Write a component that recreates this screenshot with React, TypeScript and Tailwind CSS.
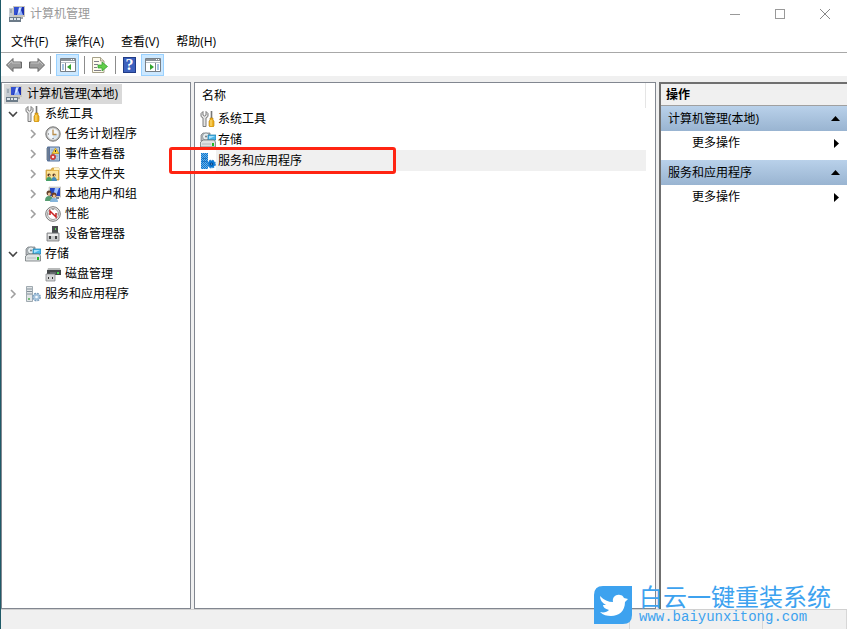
import type { ReactNode } from "react";

function Svg({ children }: { children: ReactNode }) {
  return (
    <svg viewBox="0 0 16 16" className="size-4 shrink-0" aria-hidden="true">
      {children}
    </svg>
  );
}

function ComputerIcon() {
  return (
    <Svg>
      <path d="M4 0h12v11H4z" fill="#c9c6bc" />
      <path d="M5 1h10v8H5z" fill="#1b2fae" />
      <path d="M5 1h5L7 9H5z" fill="#3350d0" />
      <path d="m10 1 3 0-1 3 2 5H8z" fill="#8fb0fa" />
      <path d="m10 2 2 0-1 4-2 2z" fill="#dbe8ff" />
      <path d="M0 2h4v9H0z" fill="#c6ccd2" />
      <path d="M1 4h2M1 6h2" stroke="#7d8a95" />
      <path d="M0 11h12v5H0z" fill="#6c7b88" />
      <path d="M1 12h3v2H1zM5 12h2v2H5zM8 12h3v2H8z" fill="#dfe6ec" />
      <path d="M12 11h2v2h-2z" fill="#a5a8ab" />
    </Svg>
  );
}

function ToolsIcon() {
  return (
    <Svg>
      <path d="M3 .5 1 2.500v3l2 1.500v8.500h3V7l2-1.500v-3L6 .5V4L4.500 5 3 4z" fill="#e3e3e3" stroke="#707070" strokeWidth=".9" />
      <path d="M11.500 0v8" stroke="#777" strokeWidth="1.600" />
      <path d="M10 7h3v2l1 1v5l-1 1h-3l-1-1v-5l1-1z" fill="#efb321" stroke="#b37b08" strokeWidth=".6" />
      <path d="M11 9v6" stroke="#ffe28a" />
    </Svg>
  );
}

function ClockIcon() {
  return (
    <Svg>
      <circle cx="8" cy="8" r="7.200" fill="#b7b7b5" stroke="#777" />
      <circle cx="8" cy="8" r="5.600" fill="#f3f7fb" stroke="#ddd" strokeWidth=".5" />
      <path d="M8 8h5a5 5 0 0 1-5 5z" fill="#d4e5f4" />
      <path d="M8 3.500V8.500h3.500" fill="none" stroke="#b98d4a" strokeWidth="1.300" />
      <path d="M3 8h1M8 12v1" stroke="#555" />
    </Svg>
  );
}

function EventIcon() {
  return (
    <Svg>
      <path d="M2.500 1h12v14h-12z" fill="#b6cbe2" stroke="#52719b" />
      <path d="M3 1h2v14H3z" fill="#5d7396" />
      <path d="M1 3h3M1 5h3M1 7h3M1 9h3M1 11h3M1 13h3" stroke="#7b8591" />
      <path d="M6 4h7M6 7h7M6 10h7M6 13h7" stroke="#7d9cbd" strokeWidth=".7" />
      <path d="m10.500 2 3.500 5.500H7z" fill="#ffd23c" stroke="#b98d0b" strokeWidth=".6" />
      <path d="M10.500 4v2" stroke="#333" />
      <circle cx="8" cy="11" r="2.700" fill="#d84545" stroke="#a92929" strokeWidth=".5" />
      <path d="m7 10 2 2m0-2-2 2" stroke="#fff" strokeWidth=".8" />
    </Svg>
  );
}

function SharedIcon() {
  return (
    <Svg>
      <path d="M1 4h5l1-2h7v12H1z" fill="#e7ba50" stroke="#c29335" strokeWidth=".7" />
      <path d="M2 5h11v8H2z" fill="#fbe399" />
      <path d="M9 2h5v2H9z" fill="#fff4c9" />
      <circle cx="4" cy="9" r="1.600" fill="#5b3b22" />
      <circle cx="9" cy="9" r="1.600" fill="#5b3b22" />
      <path d="M1 15q0-4 3-4t3 4z" fill="#45a067" />
      <path d="M6.500 15q0-4 2.500-4t3 4z" fill="#438bb7" />
      <path d="M4 9.500h1M9 9.500h1" stroke="#efc59b" strokeWidth="1.400" />
    </Svg>
  );
}

function UsersIcon() {
  return (
    <Svg>
      <path d="M4 1h12v10H4z" fill="#d8d6cc" stroke="#a9aaa8" strokeWidth=".5" />
      <path d="M5 2h10v8H5z" fill="#2446c4" />
      <path d="M10 2h4l-3 8H8z" fill="#9cc0ff" />
      <path d="M11 11h3v2h-3z" fill="#7c8793" />
      <circle cx="4" cy="7" r="2.500" fill="#65412b" />
      <circle cx="9" cy="9" r="2.500" fill="#6d3c20" />
      <circle cx="4.300" cy="8" r="1.500" fill="#edc097" />
      <circle cx="9.200" cy="10" r="1.500" fill="#edc097" />
      <path d="M0 15q0-5 4-5t4 5z" fill="#559b70" />
      <path d="M5 16q0-4 4-4t4 4z" fill="#84b5dc" />
    </Svg>
  );
}

function PerformanceIcon() {
  return (
    <Svg>
      <circle cx="8" cy="8" r="7.300" fill="#eee" stroke="#777" />
      <circle cx="8" cy="8" r="5.500" fill="#fff" stroke="#777" strokeWidth=".7" />
      <path d="M5 9V5l6 6V7" fill="none" stroke="#c92020" strokeWidth="1.500" />
      <path d="M3.500 8h1M11.500 8h1M8 3v1" stroke="#555" />
    </Svg>
  );
}

function DeviceIcon() {
  return (
    <Svg>
      <path d="M7 0h6v8H7z" fill="#4a4d50" />
      <path d="M10 2h1v2h-1z" fill="#53de4d" />
      <path d="M2 7h12v8H2z" fill="#c8c9ca" stroke="#77797b" strokeWidth=".8" />
      <path d="M3 8h10v2H3z" fill="#ececec" />
      <path d="M4 10h2v3H4zM10 10h2v3h-2z" fill="#404244" />
    </Svg>
  );
}

function StorageIcon() {
  return (
    <Svg>
      <path d="M1 3 3 1h7v8H1z" fill="#b7bbbe" stroke="#71777c" strokeWidth=".7" />
      <circle cx="6" cy="4.500" r="3.500" fill="#e7edef" stroke="#7e898e" strokeWidth=".7" />
      <circle cx="6" cy="4.500" r="1" fill="#70777b" />
      <path d="M8 3h8v5H8z" fill="#4bb5e9" stroke="#187aa9" strokeWidth=".7" />
      <path d="M9 4h6L9 7z" fill="#a8e1fc" />
      <path d="m2 9 1-1h11l1.500 2v5H.5v-5z" fill="#dfe2e3" stroke="#70777a" strokeWidth=".8" />
      <path d="M2 12h9" stroke="#b3b9bc" />
      <path d="M12 11h2v3h-2z" fill="#22b927" />
    </Svg>
  );
}

function DiskIcon() {
  return (
    <Svg>
      <path d="M3 2h12l1 3H2z" fill="#b7b9b9" />
      <path d="M2 4h14v5H2z" fill="#45484a" />
      <path d="M12 6h2v2h-2z" fill="#46e051" />
      <path d="M5 7h6" stroke="#82898c" />
      <path d="M1 8h9v7H1z" fill="#d4d5d6" stroke="#797c80" strokeWidth=".7" />
      <path d="M3 11h1v2H3zM7 11h1v2H7z" fill="#333" />
    </Svg>
  );
}

function ServicesIcon() {
  return (
    <Svg>
      <path d="M1.500.5h6v15h-6z" fill="#e1e5e7" stroke="#8b979f" strokeWidth=".8" />
      <path d="M2 3h5M2 5.500h5M2 8h5" stroke="#82909a" />
      <path d="M3 12h2v2H3z" fill="#73bb77" />
      <circle cx="11.500" cy="11" r="3.400" fill="#b5d0e6" stroke="#7d9fbd" strokeWidth="2" strokeDasharray="1.800 .870" />
      <circle cx="11.500" cy="11" r="3" fill="#a3c2dc" />
      <circle cx="11.500" cy="11" r="1.300" fill="#f4faff" />
    </Svg>
  );
}

function SelectedServicesIcon() {
  return (
    <Svg>
      <defs>
        <pattern id="dither" width="2" height="2" patternUnits="userSpaceOnUse">
          <path d="M0 0h2v2H0z" fill="#0a78d4" />
          <path d="M0 0h1v1H0zM1 1h1v1H1z" fill="#6fb0e2" />
        </pattern>
      </defs>
      <path d="M1 0h7v16H1z" fill="url(#dither)" />
      <path d="M2 5.500h5M2 8.500h5" stroke="#0a63b4" strokeWidth=".6" />
      <circle cx="11.500" cy="11" r="3.400" fill="#0a78d4" stroke="#2a86d4" strokeWidth="2" strokeDasharray="1.800 .870" />
      <circle cx="11.500" cy="11" r="3" fill="#0a78d4" />
      <circle cx="11.500" cy="11" r="1.500" fill="#063f80" />
      <circle cx="11.500" cy="11" r=".6" fill="#a8d2f2" />
    </Svg>
  );
}

function Chevron({ open }: { open: boolean }) {
  return (
    <svg viewBox="0 0 10 10" className="size-[10px]" fill="none" aria-hidden="true">
      <path d={open ? "m1 3 4 4 4-4" : "m3 1 4 4-4 4"} stroke={open ? "#444" : "#a0a0a0"} strokeWidth="1.600" />
    </svg>
  );
}

function ArrowIcon({ back = false }: { back?: boolean }) {
  return (
    <Svg>
      <path
        d={back ? "M.5 8 7 1.500V5h8.500v6H7v3.500z" : "M15.500 8 9 1.500V5H.5v6H9v3.500z"}
        fill="#9b9b9b"
        stroke="#686868"
      />
      <path d={back ? "M2 8 6 4v2h8" : "M2 6h8V4l4 4"} fill="none" stroke="#c4c4c4" />
    </Svg>
  );
}

function PaneIcon({ right = false }: { right?: boolean }) {
  return (
    <svg viewBox="0 0 16 14" className="h-[14px] w-4" aria-hidden="true">
      <path d="M.5.500h15v13H.5z" fill="#fff" stroke="#777f86" />
      <path d="M1 1h14v2H1z" fill="#8b9298" />
      <path d="M11 1.500h1M13 1.500h1" stroke="#fff" />
      <path d="M1 4.500h14" stroke="#b9c1c7" />
      <path d={right ? "M10.500 5v8" : "M5.500 5v8"} stroke="#7c868e" />
      <path d={right ? "M12 7h2M12 9h2M12 11h2" : "M2 7h2M2 9h2M2 11h2"} stroke="#4d89c7" />
      <path d={right ? "m5 6 4 3-4 3z" : "m11 6-4 3 4 3z"} fill="#32a52e" />
    </svg>
  );
}

function ExportIcon() {
  return (
    <Svg>
      <path d="M.5.500h8L12 4v11.500H.5z" fill="#fffced" stroke="#a6a189" />
      <path d="M8.500.5V4H12" fill="#e5e1cd" stroke="#a6a189" />
      <path d="M2 4.500h5M2 7.500h4M2 10.500h3M2 13.500h7" stroke="#807f89" />
      <path d="M6 8h4V5l5.500 4.500L10 14v-3H6z" fill="#62ce4a" stroke="#299b28" strokeWidth=".7" />
    </Svg>
  );
}

function HelpIcon() {
  return (
    <span className="flex h-4 w-[13px] items-center justify-center border border-[#203b86] bg-[#3d61bd] font-['Liberation_Serif',serif] text-base leading-4 font-bold text-white">
      ?
    </span>
  );
}

type Node = { label: string; icon: ReactNode; open?: boolean; children?: Node[] };

const nodes: Node[] = [
  {
    label: "系统工具",
    icon: <ToolsIcon />,
    open: true,
    children: [
      { label: "任务计划程序", icon: <ClockIcon />, open: false },
      { label: "事件查看器", icon: <EventIcon />, open: false },
      { label: "共享文件夹", icon: <SharedIcon />, open: false },
      { label: "本地用户和组", icon: <UsersIcon />, open: false },
      { label: "性能", icon: <PerformanceIcon />, open: false },
      { label: "设备管理器", icon: <DeviceIcon /> },
    ],
  },
  {
    label: "存储",
    icon: <StorageIcon />,
    open: true,
    children: [{ label: "磁盘管理", icon: <DiskIcon /> }],
  },
  { label: "服务和应用程序", icon: <ServicesIcon />, open: false },
];

function TreeItem({ node }: { node: Node }) {
  return (
    <li role="treeitem" aria-expanded={node.open}>
      <div className="flex h-5 items-center">
        {node.open === undefined ? (
          <span className="w-[21px]" />
        ) : (
          <button aria-label={`${node.open ? "折叠" : "展开"}${node.label}`} className="flex w-[21px] pl-1">
            <Chevron open={node.open} />
          </button>
        )}
        {node.icon}
        <span className="pl-1 whitespace-nowrap">{node.label}</span>
      </div>
      {node.children && (
        <ul role="group" className="pl-5">
          {node.children.map((child) => (
            <TreeItem key={child.label} node={child} />
          ))}
        </ul>
      )}
    </li>
  );
}

function ActionGroup({ title }: { title: string }) {
  return (
    <section className="mb-[5px]">
      <button className="flex h-[25px] w-full items-center justify-between bg-linear-to-b from-[#b9d1ea] to-[#99b4d1] px-[7px]">
        {title}
        <svg viewBox="0 0 9 5" className="h-[5px] w-[9px]" aria-hidden="true">
          <path d="M0 5 4.500 0 9 5z" />
        </svg>
      </button>
      <button className="flex h-6 w-full items-center justify-between pr-2 pl-[31px]">
        更多操作
        <svg viewBox="0 0 5 9" className="h-[9px] w-[5px]" aria-hidden="true">
          <path d="m0 0 5 4.500L0 9z" />
        </svg>
      </button>
    </section>
  );
}

function Separator() {
  return <span className="h-[18px] w-px bg-[#8c8c8c]" />;
}

const toggled = "flex h-[22px] w-[23px] items-center justify-center border border-[#99d1ff] bg-[#cce8ff]";

export default function App() {
  return (
    <div className="relative flex h-screen flex-col overflow-hidden border-l border-[#1f5a68] bg-[#f0f0f0] font-['Open_Sans','Noto_Sans_CJK_SC',sans-serif] text-xs leading-5 text-black">
      <header className="flex h-7 shrink-0 items-center bg-white pl-2 text-[#999]">
        <ComputerIcon />
        <h1 className="grow pl-[5px]">计算机管理</h1>
        <div className="flex gap-[1px]">
          <button aria-label="最小化" className="flex h-7 w-11 items-center justify-center">
            <span className="h-px w-[10px] bg-[#999]" />
          </button>
          <button aria-label="最大化" className="flex h-7 w-11 items-center justify-center">
            <span className="size-[10px] border border-[#999]" />
          </button>
          <button aria-label="关闭" className="flex h-7 w-11 items-center justify-center">
            <svg viewBox="0 0 10 10" className="size-[10px]" stroke="#888" aria-hidden="true">
              <path d="m0 0 10 10M10 0 0 10" />
            </svg>
          </button>
        </div>
      </header>
      <nav className="flex h-[25px] shrink-0 items-end gap-[17px] border-b border-[#a8a8a8] bg-white pl-[10px]">
        <button>文件(F)</button>
        <button>操作(A)</button>
        <button>查看(V)</button>
        <button>帮助(H)</button>
      </nav>
      <div className="flex h-[23px] shrink-0 items-center gap-[5px] bg-white pl-[5px]" role="toolbar">
        <button aria-label="后退" className="mr-[2px]"><ArrowIcon back /></button>
        <button aria-label="前进"><ArrowIcon /></button>
        <Separator />
        <button aria-label="显示控制台树" aria-pressed="true" className={toggled}><PaneIcon /></button>
        <div className="flex items-center gap-[7px]">
          <Separator />
          <button aria-label="导出列表"><ExportIcon /></button>
          <Separator />
          <button aria-label="帮助"><HelpIcon /></button>
        </div>
        <button aria-label="显示操作窗格" aria-pressed="true" className={toggled}><PaneIcon right /></button>
      </div>

      <main className="mt-[6px] flex min-h-0 grow gap-[3px]">
        <nav aria-label="控制台树" className="w-[190px] shrink-0 border border-[#828790] bg-white pt-px pl-[2px]">
          <div className="flex h-5 w-fit items-center bg-[#d9d9d9] pr-1 pl-[2px]">
            <ComputerIcon />
            <span className="pl-[5px]">计算机管理(本地)</span>
          </div>
          <ul role="tree">
            {nodes.map((node) => (
              <TreeItem key={node.label} node={node} />
            ))}
          </ul>
        </nav>

        <section className="relative min-w-0 grow border border-[#828790] bg-white pr-[9px] pl-[5px]">
          <table className="w-full border-collapse text-left">
            <thead>
              <tr className="h-[25px]">
                <th className="border-r border-[#e5e5e5] pl-[2px] font-normal">名称</th>
              </tr>
            </thead>
            <tbody>
              <tr className="h-[21px]">
                <td className="p-0"><div className="flex items-center gap-[2px]"><ToolsIcon />系统工具</div></td>
              </tr>
              <tr className="h-[21px]">
                <td className="p-0"><div className="flex items-center gap-[2px]"><StorageIcon />存储</div></td>
              </tr>
              <tr className="h-[21px]" aria-selected="true">
                <td className="p-0">
                  <div className="flex items-center">
                    <SelectedServicesIcon />
                    <span className="grow bg-[#f0f0f0] pl-[2px] leading-[21px]">服务和应用程序</span>
                  </div>
                </td>
              </tr>
            </tbody>
          </table>
          <div className="pointer-events-none absolute top-16 -left-[26px] h-[27px] w-[227px] rounded-[3px] border-3 border-[#ff2412]" />
        </section>

        <aside className="w-[188px] shrink-0 border-t-2 border-l-2 border-[#6f6f6f] bg-white">
          <h2 className="h-[22px] border-b border-[#a0a0a0] bg-[#f0f0f0] pl-[5px] leading-[22px] font-bold">操作</h2>
          <ActionGroup title="计算机管理(本地)" />
          <ActionGroup title="服务和应用程序" />
        </aside>
      </main>

      <footer className="flex h-5 shrink-0 justify-end border-t border-[#d0d0d0]">
        <span className="w-[133px] border-l border-[#d7d7d7]" />
        <span className="w-[85px] border-x border-[#d7d7d7]" />
      </footer>

      <div className="absolute right-[10px] bottom-1 flex items-center gap-[7px] text-[#3da2ef]">
        <svg viewBox="0 0 38 38" className="size-[38px]" aria-hidden="true">
          <path d="M9 0h29v29q0 9-9 9H0V9q0-9 9-9z" fill="#3da2ef" />
          <path d="M6 10c4 4 8 6 13 6-1-5 3-8 7-7 2 0 3 1 4 3l4 1-3 3c0 9-6 14-14 14-4 0-8-1-11-4 4 1 7 0 9-2-4-1-6-3-6-5h3c-4-2-6-5-6-9z" fill="#fff" />
        </svg>
        <div className="w-[198px]">
          <p className="text-2xl leading-6 whitespace-nowrap">白云一键重装系统</p>
          <p className="font-['Liberation_Mono',monospace] text-sm leading-4 whitespace-nowrap">www.baiyunxitong.com</p>
        </div>
      </div>
    </div>
  );
}
